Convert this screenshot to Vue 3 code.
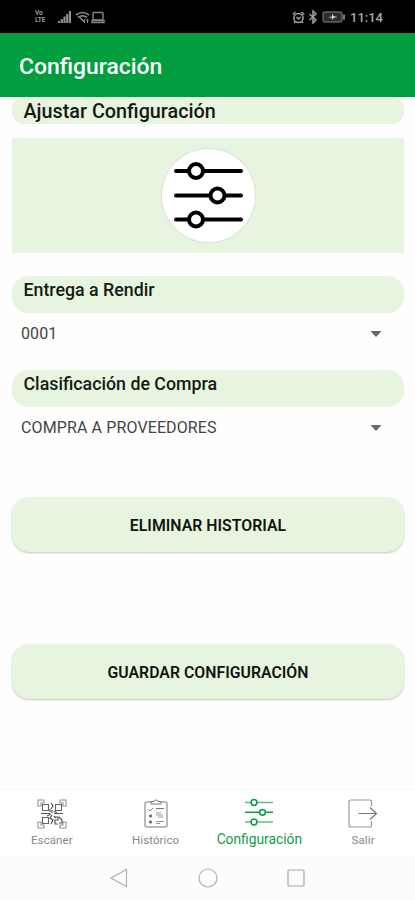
<script setup>
const signalBars = [2, 4, 6.5, 9, 12]
</script>

<template>
  <div class="screen">
    <div class="status">
      <div class="volte"><span>Vo</span><span>LTE</span></div>
      <svg class="signal" width="14" height="13" viewBox="0 0 14 13">
        <rect v-for="(h, i) in signalBars" :key="i" :x="i * 2.7" :y="12 - h" width="2.2" :height="h" fill="#8d8d8d" />
      </svg>
      <svg class="wifi" width="15" height="13" viewBox="0 0 15 13" fill="none" stroke="#8d8d8d" stroke-width="1.6">
        <path d="M1 4Q7.500-1 14 4M3 6.500Q7.500 3 12 6.500M5 6.800l4 4" />
        <path d="M9.500 8v4M12.500 12V8M11.300 9.300L12.500 8l1.200 1.300" stroke-width="1" />
      </svg>
      <svg class="laptop" width="14" height="13" viewBox="0 0 14 13" fill="none" stroke="#858585" stroke-width="1.4">
        <rect x="2" y="1.500" width="10" height="7.500" rx="1" /><path d="M1 9.500h12v2H1z" />
      </svg>
      <svg class="alarm" width="13" height="13" viewBox="0 0 13 13" fill="none" stroke="#a0a0a0" stroke-width="1.500">
        <circle cx="6.500" cy="7" r="4.600" /><path d="M.8 3.500L3.500 1M12.200 3.500L9.500 1M4.500 6l2 2 2.300-2M3.300 10.500L2 12M9.700 10.500L11 12" />
      </svg>
      <svg class="bluetooth" width="10" height="14" viewBox="0 0 10 14" fill="none" stroke="#a0a0a0" stroke-width="1.500">
        <path d="M1.500 4l6.500 6-3 3V1l3 3-6.500 6" />
      </svg>
      <svg class="battery" width="24" height="12" viewBox="0 0 24 12">
        <rect x="1" y="1" width="19" height="10" rx="2.500" fill="#2c2c2c" stroke="#606060" stroke-width="1.500" />
        <path d="M22 3.500v5" stroke="#888" stroke-width="1.800" />
        <path d="M6 6.200l4-.8V3l1.800 2.200 4 .8-4 .8L10 9V6.800z" fill="#ddd" />
      </svg>
      <time>11:14</time>
    </div>

    <header><h1>Configuración</h1></header>

    <main>
      <h2 class="pill intro">Ajustar Configuración</h2>
      <div class="banner">
        <div class="disc">
          <svg width="93" height="93" viewBox="0 0 93 93" fill="#fff" stroke="#000" stroke-width="4" stroke-linecap="round">
            <path d="M14 22h65M14 46.500h65M14 70.500h65" />
            <circle cx="34" cy="22" r="7" /><circle cx="55.500" cy="46.500" r="7" /><circle cx="34" cy="70.500" r="7" />
          </svg>
        </div>
      </div>
      <h3 class="pill first">Entrega a Rendir</h3>
      <div class="select"><span class="code">0001</span><svg width="12" height="6"><path d="M.5 0h11L6 6z" fill="#666" /></svg></div>
      <h3 class="pill second">Clasificación de Compra</h3>
      <div class="select"><span class="provider">COMPRA A PROVEEDORES</span><svg width="12" height="6"><path d="M.5 0h11L6 6z" fill="#666" /></svg></div>
      <button class="clear"><span>ELIMINAR HISTORIAL</span></button>
      <button class="save"><span>GUARDAR CONFIGURACIÓN</span></button>
    </main>

    <nav class="tabs">
      <div class="tab scan">
        <svg width="30" height="30" viewBox="0 0 30 30" fill="none" stroke="#707070" stroke-width="1.100">
          <path d="M1 7V1h6v3H4v3zM23 1h6v6h-3V4h-3zM1 23v6h6v-3H4v-3zM29 23v6h-6v-3h3v-3z" stroke="#929292" />
          <path d="M5.500 5.500h6v6h-6zM18.500 5.500h6v6h-6zM5.500 18.500h6v6h-6z" stroke="#666" />
          <path d="M14 4l2 3-2 3M13 10v3M4 14.500h9M17 14.500h9M15 11v3M18 18h3v3h-3v4h3M22 18l3 3v3h-3M10 17l4-2M17 12l3 2M15 16l-2 3 3 2-2 4M17 17l2 2" stroke="#555" stroke-width="1.200" />
        </svg>
        <span>Escáner</span>
      </div>
      <div class="tab history">
        <svg width="24" height="30" viewBox="0 0 24 30" fill="none" stroke="#777" stroke-width="1">
          <path d="M7 3H2Q1 3 1 4v23q0 1 1 1h20q1 0 1-1V4q0-1-1-1h-5" />
          <path d="M7 5V2.500h3Q10 1 12 1t2 1.500h3V5z" />
          <path d="M4.500 10.500L6 12l3-3M12 9.500h8" />
          <path d="M5.500 16h2v2h-2zM5.500 22h2v2h-2z" fill="#666" /><path d="M12 14h5M12 16h7M14 18h5M12 22.500h8M12 24.500h4" stroke="#999" />
        </svg>
        <span>Histórico</span>
      </div>
      <div class="tab active">
        <svg width="28" height="28" viewBox="0 0 28 28" fill="#fff" stroke="#079b42" stroke-width="1.500">
          <path d="M0 4.500h28M0 24h28" stroke="#65bd86" /><path d="M0 14.300h28" />
          <circle cx="9" cy="4.500" r="2.900" /><circle cx="17.500" cy="14.300" r="2.900" /><circle cx="9" cy="24" r="2.900" />
        </svg>
        <span>Configuración</span>
      </div>
      <div class="tab exit">
        <svg width="30" height="30" viewBox="0 0 30 30" fill="none" stroke="#999" stroke-width="1.200">
          <path d="M23.500 7V3q0-2-2-2H3Q1 1 1 3v23q0 2 2 2h18.500q2 0 2-2v-4" />
          <path d="M10.500 14.500H28M22 8.500l6.500 6-6.500 6" stroke="#777" />
        </svg>
        <span>Salir</span>
      </div>
    </nav>
    <div class="system">
      <svg width="18" height="20" fill="none" stroke="#b0b0b0" stroke-width="1.200"><path d="M1 10L16.500 1.500v17z" /></svg>
      <svg width="20" height="20" fill="none" stroke="#b0b0b0" stroke-width="1.200"><circle cx="10" cy="10" r="9" /></svg>
      <svg width="18" height="18" fill="none" stroke="#a8a8a8" stroke-width="1.200"><rect x="1" y="1" width="16" height="16" rx="1" /></svg>
    </div>
  </div>
</template>

<style>
body { background: #fff; overflow: hidden; }
</style>
<style scoped>
* { box-sizing: border-box; }
.screen { width: 415px; height: 900px; display: flex; flex-direction: column; background: #fefefe; font-family: Roboto, "Liberation Sans", sans-serif; overflow: hidden; }
svg { display: block; flex: none; }
h1, h2, h3 { margin: 0; font-weight: 500; }
.status { height: 33px; flex: none; background: #000; display: flex; align-items: center; padding: 1px 32px 0 35px; color: #aaa; }
.volte { width: 13px; display: flex; flex-direction: column; font-size: 6.500px; line-height: 7px; font-weight: 700; color: #999; }
.signal { margin-left: 10px; }
.wifi { margin-left: 3px; }
.laptop { margin-left: 1px; }
.alarm { margin-left: auto; }
.bluetooth { margin-left: 3px; }
.battery { margin-left: 4px; }
time { margin-left: 4px; width: 33px; font-size: 13px; font-weight: 500; white-space: nowrap; }
header { height: 64px; flex: none; background: #019d3e; display: flex; align-items: center; padding: 4px 19px 0; }
h1 { color: #fff; font-size: 22.900px; line-height: 26px; }
main { height: 692px; flex: none; display: flex; flex-direction: column; padding: 0 11px 0 12px; }
.pill { flex: none; background: #e7f4df; color: #151b13; padding-left: 11.500px; border-radius: 16px; white-space: nowrap; }
.intro { height: 27px; font-size: 19.800px; line-height: 30px; border-radius: 12px; }
.banner { height: 115px; flex: none; margin-top: 14px; background: #e7f4df; display: flex; justify-content: center; align-items: center; }
.disc { width: 93px; height: 93px; border-radius: 50%; background: #fff; box-shadow: 0 0 1px 1px #dbe2d6; }
h3.pill { height: 37px; font-size: 17.800px; line-height: 27px; }
.first { margin-top: 23px; }
.second { margin-top: 15px; }
.select { height: 42px; flex: none; display: flex; align-items: center; justify-content: space-between; padding: 0 22px 2px 9px; color: #444; font-size: 16px; letter-spacing: .12px; }
.select svg { margin-top: 1px; }
.clear, .save { width: 392px; height: 55px; flex: none; border: 0; border-radius: 17px; background: #e7f4df; box-shadow: 0 1px 2px #bfc6bb; font: 600 15.800px Roboto, "Liberation Sans", sans-serif; letter-spacing: .03px; color: #101510; padding: 1px 0 0; }
.clear { margin-top: 48px; }
.save { margin-top: 92px; }
.tabs { height: 66px; flex: none; display: grid; grid-template-columns: repeat(4, 1fr); border-top: 1px solid #f7f7f7; background: #fff; }
.tab { display: flex; flex-direction: column; align-items: center; padding-top: 9px; color: #888; font-size: 11.500px; line-height: 16px; letter-spacing: .1px; }
.tab > span { margin-top: 3px; }
.tab.active { padding-top: 8px; color: #17994b; font-size: 13.800px; }
.tab.active > span { margin-top: 5px; letter-spacing: 0; }
.system { height: 45px; flex: none; display: flex; align-items: center; padding: 1px 110px 0; justify-content: space-between; background: #fcfcfc; }
</style>
